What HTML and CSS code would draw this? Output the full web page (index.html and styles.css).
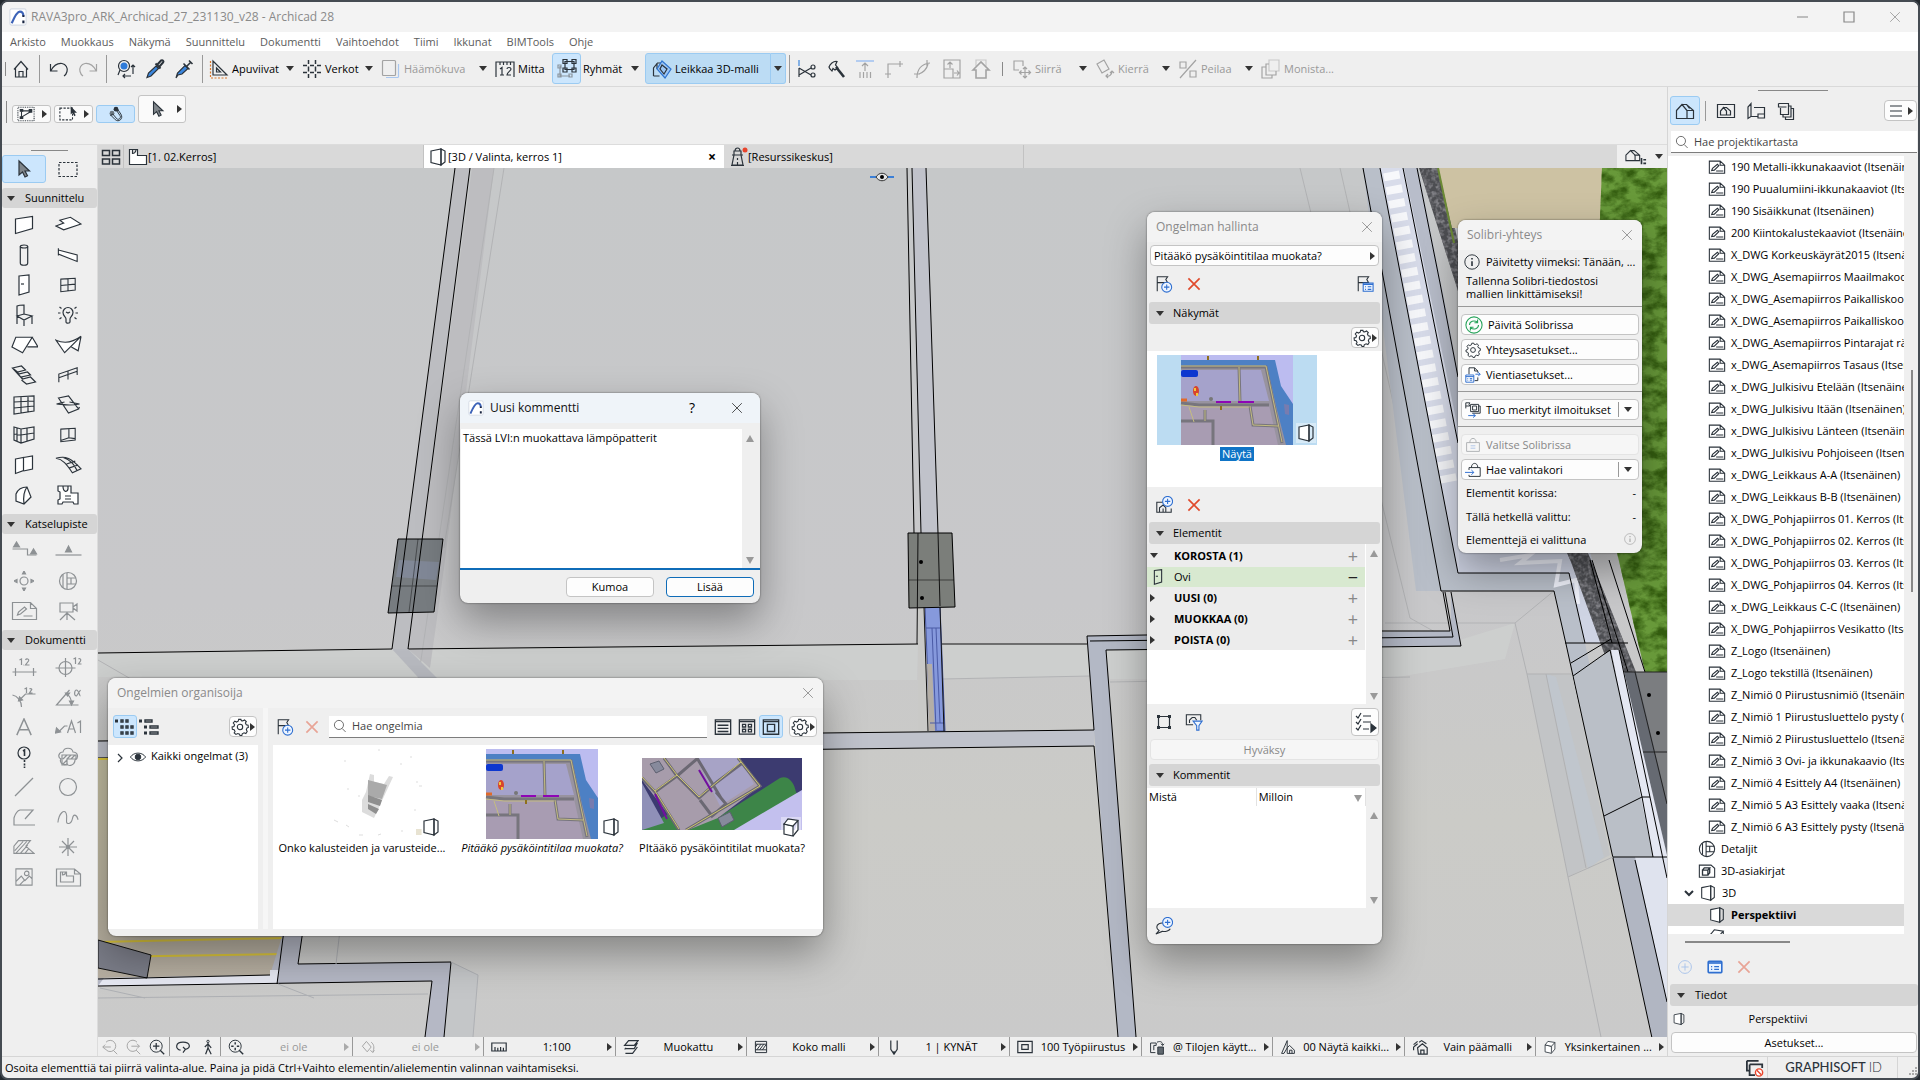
FILE: index.html
```html
<!DOCTYPE html>
<html lang="fi">

<head>
    <meta charset="utf-8">
    <meta name="viewport" content="width=device-width">
    <title>RAVA3pro_ARK_Archicad_27_231130_v28 - Archicad 28</title>
    <link rel="stylesheet" href="styles.css">
</head>

<body>
    <!-- icon sprite -->
    <svg class="sprite" aria-hidden="true">
        <symbol id="logo" viewBox="0 0 20 20"><rect x="1" y="1" width="18" height="18" rx="2" fill="#fff" stroke="#d5dbe5" /><path d="M3 17C6 10 9 4 12 4c3 0 4 2 4 5" stroke="#3d63b8" stroke-width="2.4" /><path d="M16 8v2M16 14v3" stroke="#16233f" stroke-width="2.4" /></symbol>
        <symbol id="home" viewBox="0 0 20 20"><path d="M3 10.500 10 2.500l7 8M4.500 9v9h11V9M8 18v-5.500h4V18" /></symbol>
        <symbol id="undo" viewBox="0 0 20 20"><path d="M1.500 5v7h7M2 11.500C5 6 9 4 13 4.500c4 .7 6 4.500 5 8-.5 2-1.500 3.500-3 4.500" /></symbol>
        <symbol id="redo" viewBox="0 0 20 20"><path d="M18.500 5v7h-7M18 11.500C15 6 11 4 7 4.500c-4 .7-6 4.500-5 8 .5 2 1.500 3.500 3 4.500" /></symbol>
        <symbol id="find" viewBox="0 0 20 20"><circle cx="8" cy="7" r="5.500" /><circle cx="8" cy="7" r="3.500" fill="#2f7bd9" stroke="none" /><path d="M4 11l-2 5M17 15V6m-2 2 2-2 2 2M15 17H7m2-2-2 2 2 2" /></symbol>
        <symbol id="pick" viewBox="0 0 20 20"><path d="m12 6 4-4.500c2-1 3 1 2 2L14 8M10.500 4.500l5 5" stroke-width="2" /><path d="m11 7 2.500 2.500L6 17l-4 1.500L3.500 14z" fill="#3b86dd" /></symbol>
        <symbol id="inject" viewBox="0 0 20 20"><path d="m13 7 4-4M15 1.500l3.500 3.500M9.500 4.500l6 6" stroke-width="1.600" /><path d="m11 6.500 3 3L8 15l-4 1-2 3 1.500-5z" fill="#3b86dd" /></symbol>
        <symbol id="guide" viewBox="0 0 20 20"><path d="M4 2v14h14zM7.500 9v4h4z" /><path d="M1.500 2v17H19" stroke="#d9772b" stroke-dasharray="2 1.500" /></symbol>
        <symbol id="hash" viewBox="0 0 20 20"><path d="M6.500 1v4m0 2.500v5m0 2.500v4M13.500 1v4m0 2.500v5m0 2.500v4M1 6.500h4m3 0h4m3 0h4M1 13.500h4m3 0h4m3 0h4" stroke-width="1.500" /></symbol>
        <symbol id="ghost" viewBox="0 0 20 20"><rect x="1.500" y="1.500" width="13" height="15" rx="1" /><path d="M17.500 5v12.500a1 1 0 0 1-1 1H5" stroke="#a9c7ef" /></symbol>
        <symbol id="measure" viewBox="0 0 20 20"><path d="M1 18V3h18v15M5 3v3M8.500 3v3M12 3v3M15.500 3v3M5 10l2-1.500V16m-2 0h4M12 10c0-2 4-2 4 0 0 2-4 3-4 6h4" /></symbol>
        <symbol id="group" viewBox="0 0 20 20"><path d="M8 2.500h9v8H8zM6 0.500v4h4v-4zM15 .5v4h4v-4zM6 9v4h4V9zM15 9v4h4V9z" /><path d="M3 7v10h10M1 6h3v3H1zM1 15h3v3H1zM12 15h3v3h-3z" stroke="#8b959e" /></symbol>
        <symbol id="cut3d" viewBox="0 0 20 20"><path d="M1.500 17V9l4-5h4M1.500 17h6M5 4v6" /><path d="m10 2 9 8-6 9-8-9z" stroke="#2f74d0" fill="#9cc6f5" /><path d="m10 6 5 4-3 5-4-5z" /></symbol>
        <symbol id="scissors" viewBox="0 0 20 20"><path d="M2 1v6" stroke="#3b86dd" /><path d="M2 9v9M2 9l12 7M2 16l12-7" /><circle cx="16" cy="8" r="2" /><circle cx="16" cy="16" r="2" /></symbol>
        <symbol id="axe" viewBox="0 0 20 20"><path d="M3 8c1-3 4-6 8-5.500L9.500 6 12 9 9 11 7 9.500 6 12c-1-1-2.500-2-3-4z" /><path d="m10 8 8 10" stroke-width="2.600" /></symbol>
        <symbol id="raise" viewBox="0 0 20 20"><path d="M1 2h18" stroke="#9fc0f0" stroke-width="1.600" /><path d="M10 12V4M7 7l3-3 3 3M5 13v6M8.500 13v6M12 13v6M15.500 13v6" /></symbol>
        <symbol id="corner" viewBox="0 0 20 20"><path d="M4 19V5h15M16 2v6M1 15h6" /></symbol>
        <symbol id="arcedge" viewBox="0 0 20 20"><path d="M4 19C4 11 8 5 17 4M14 1v6M1 15h6M6 15C11 13 14 9 15 5" /></symbol>
        <symbol id="resize" viewBox="0 0 20 20"><path d="M2 1h16v18H2zM2 10h9v9M8 9V3M5.500 5.500 8 3l2.500 2.500M12 14h5m-2-2.500 2 2.500-2 2.500" /></symbol>
        <symbol id="rooftrim" viewBox="0 0 20 20"><path d="m2 11 8-8 8 8h-3v8H5v-8z" stroke-width="1.600" /><path d="M5 7V1h10v6" opacity=".5" /></symbol>
        <symbol id="move" viewBox="0 0 20 20"><path d="M7 11H2V2h9v5M13 8v11M7.500 13.500h11M11 10l2-2 2 2M11 17l2 2 2-2M9.500 11.500l-2 2 2 2M16.500 11.500l2 2-2 2" /></symbol>
        <symbol id="rotate" viewBox="0 0 20 20"><path d="m2 5 7-4 5 9-7 4zM11 17c3 1 6-1 6-5m-2 2 2-2 2 2M13 15l-2 2 2 2" /></symbol>
        <symbol id="mirror" viewBox="0 0 20 20"><path d="M18 1 2 19M2 3h6v6H2zM12 12h6v6h-6z" /></symbol>
        <symbol id="copies" viewBox="0 0 20 20"><path d="M8 1h10v11H8z" opacity=".5" /><path d="M8 5H5v11h10v-4M5 8H1v11h10v-3" /></symbol>
        <symbol id="geom" viewBox="0 0 20 17"><path d="M1 1h18v15H1z" stroke-dasharray="1 1" /><path d="M4 5h12M5 6v6M5 12l10-6" /><path d="M3 3h4v3H3zM13 3h4v4h-4zM3 11h4v3H3z" fill="#2b333b" stroke="none" /></symbol>
        <symbol id="marqueesel" viewBox="0 0 20 17"><path d="M1 2h14v13H1z" stroke-dasharray="2.500 1.500" /><path d="M13 0v9l2-2 2 4 1.500-1-1.500-3h3z" fill="#2b333b" stroke="none" /></symbol>
        <symbol id="magnet" viewBox="0 0 20 20"><circle cx="5" cy="9" r="3" fill="#6b7781" stroke="none" /><circle cx="10" cy="4" r="3" fill="#2b333b" stroke="none" /><path d="m6 10 5 6c2 2 6-1 4-4l-4-6M3 11l6 6c4 4 11-1 7-7l-4-6M6 10l-3 2" /></symbol>
        <symbol id="arrow" viewBox="0 0 20 20"><path d="M5 2v14l3.500-3 2.500 5 2.500-1.200L11 12h4.500z" fill="#7f858a" /></symbol>
        <symbol id="marquee" viewBox="0 0 20 20"><path d="M1 3.500h18v14H1z" stroke-dasharray="2.500 1.500" /></symbol>
        <symbol id="tabs" viewBox="0 0 20 20"><path d="M1.500 3.500h7v5h-7zM11.500 3.500h7v5h-7zM1.500 12h7v5h-7zM11.500 12h7v5h-7z" stroke-width="1.500" /></symbol>
        <symbol id="plan" viewBox="0 0 20 20"><path d="M1.500 2.500h8v6h9v9h-17zM4.500 3v3.500c2 0 3-1 3.500-3.500" fill="#fff" /></symbol>
        <symbol id="persp" viewBox="0 0 20 20"><path d="m3 4 10-2v16L3 15.500z" fill="#fff" /><path d="m13 2 4 2v11l-4 3z" /></symbol>
        <symbol id="axo" viewBox="0 0 20 20"><path d="m3 7 9 2v10l-9-2z" fill="#fff" /><path d="m3 7 4-5 10 1.500L12 9zM17 3.500V13l-5 6" fill="#fff" /></symbol>
        <symbol id="tower" viewBox="0 0 20 20"><path d="M6 8 4 18h11L13 8zM4 8h11M6 8V4h7v4M7 4c0-4 5-4 5 0M3 18.500h13M9.500 11v2m0 2v3" /><circle cx="17" cy="3" r="2.500" fill="#e8452c" stroke="none" /></symbol>
        <symbol id="house" viewBox="0 0 20 20"><path d="M1.500 9.500 7 3.500l5 6v8H1.500zM7 3.500h4.500l7 6v8H12v-8M11.500 3.500l3 4M12 9.500h6.500" /></symbol>
        <symbol id="houselist" viewBox="0 0 24 20"><path d="M1 8l5-5 5 5v6H1zM6 3h4l6 5v6h-5V8M10 8h6" /><path d="M18 11v7M20 13h3M20 17h3" stroke-width="1.800" /></symbol>
        <symbol id="viewmap" viewBox="0 0 20 20"><path d="M1.500 3.500h17v13h-17zM4.500 14v-4l3-3.500 3 3.500v4zM7.500 6.500h3l4 3.500v4h-4" /></symbol>
        <symbol id="layouts" viewBox="0 0 20 20"><path d="M2 6v11.500l3-2V2.500zM5 15.500h7M8 6.500h10.500v10.500H12v-4h6" /></symbol>
        <symbol id="publish" viewBox="0 0 20 20"><path d="M2.500 2.500h10v11h-8V7M2.500 2.500V6h8M12.500 5h2.500v11H7v-2.500M15 7.500h2.500v11h-8V16" /></symbol>
        <symbol id="glass" viewBox="0 0 20 20"><circle cx="8.500" cy="8.500" r="6.500" /><path d="m13 13.500 5 5" /></symbol>
        <symbol id="draw" viewBox="0 0 20 20"><path d="M1.500 3.500h12l5 4.500v9h-17zM13.500 3.500V8h5" /><path d="m4 14 1-2.500L10.500 7l1.500 1.500L7 13.500zM9 14.500h8" /></symbol>
        <symbol id="detail" viewBox="0 0 20 20"><circle cx="10" cy="10" r="8.500" /><path d="M5 3.500v13M9 2v16M9 7h9M9 13h9M13 7v6" /></symbol>
        <symbol id="doc3d" viewBox="0 0 20 20"><path d="M1.500 3.500h13l4 3.500v10h-17z" /><path d="M5 9h6v5.500H5zM5 9l2-2.500h6L11 9M13 6.500V12l-2 2.500" stroke-width="1.500" /></symbol>
        <symbol id="plusc" viewBox="0 0 20 20"><circle cx="10" cy="10" r="8" /><path d="M10 5.500v9M5.500 10h9" /></symbol>
        <symbol id="props" viewBox="0 0 20 20"><rect x="1.500" y="3" width="17" height="14" rx="1" fill="#e9f3ff" stroke-width="2" /><path d="M2 5h16" stroke-width="2" /><path d="M5 9.500h1.500M9 9.500h6M5 13h1.500M9 13h6" stroke-width="1.500" /></symbol>
        <symbol id="cross" viewBox="0 0 20 20"><path d="m2 2 16 16M18 2 2 18" /></symbol>
        <symbol id="flagadd" viewBox="0 0 20 20"><path d="M2.500 18V2H14l-2 3 2 3.500H2.500" /><circle cx="13" cy="13.500" r="5.500" fill="#eef5ff" stroke="#2f6fd0" /><path d="M13 10.500v6M10 13.500h6" stroke="#2f6fd0" /></symbol>
        <symbol id="flaglist" viewBox="0 0 20 20"><path d="M2.500 18V2H14l-2 3 2 3.500H2.500" /><path d="M8 9h11v9H8zM8 10.500h11M10 13h1m2 0h4m-7 3h1m2 0h4" fill="#eef5ff" stroke="#2f6fd0" /></symbol>
        <symbol id="gear" viewBox="0 0 20 20"><circle cx="10" cy="10" r="3" /><path d="m8.500 1.500-.5 2-2 1L4.200 3.500 2.500 5.500 4 7.500l-.8 2-2 .5.3 2.500 2 .5 1 2-1 1.500 2 1.800 2-1 2 .7.500 1.500H12l.5-2 2-1 2 .7L18 15l-1-2 .8-2 1.500-.5L19 8l-2-.5-1-2L17 4l-2-1.800-2 1L11.500 3l-.5-1.500z" /></symbol>
        <symbol id="thumbs" viewBox="0 0 20 20"><path d="M0 2.500h3v3H0z" fill="#2b333b" stroke="none" /><path d="M6 3h2v2H6zM11 3h2v2h-2zM6 9h2v2H6zM11 9h2v2h-2zM16 9h2v2h-2zM6 15h2v2H6zM11 15h2v2h-2zM16 15h2v2h-2z" stroke-width="1.400" /></symbol>
        <symbol id="treeview" viewBox="0 0 20 20"><path d="M0 2.500h3v3H0zM5 8.500h3v3H5zM5 14.500h3v3H5z" fill="#2b333b" stroke="none" /><path d="M6 3h7v2H6zM11 9h8v2h-8zM11 15h8v2h-8z" stroke-width="1.400" /></symbol>
        <symbol id="eye" viewBox="0 0 20 20"><path d="M.5 10C5 3.500 15 3.500 19.500 10 15 16.500 5 16.500.5 10z" /><circle cx="10" cy="10" r="3.500" fill="#2b333b" /></symbol>
        <symbol id="vlist" viewBox="0 0 20 20"><path d="M1.500 2h17v16h-17zM1.500 4h17M4 8h12M4 11.500h12M4 15h12" stroke-width="1.500" /></symbol>
        <symbol id="vgrid" viewBox="0 0 20 20"><path d="M1.500 2h17v16h-17zM1.500 4h17M5 7h3.500v3H5zM11.500 7H15v3h-3.500zM5 12.500h3.500v3H5zM11.500 12.500H15v3h-3.500z" stroke-width="1.400" /></symbol>
        <symbol id="vbig" viewBox="0 0 20 20"><path d="M1.500 2h17v16h-17zM1.500 4h17M6 7h8v8H6z" stroke-width="1.500" /></symbol>
        <symbol id="viewadd" viewBox="0 0 20 20"><path d="M9 7H2v11h16v-4M5 18v-5l4-3 3 3v5M9 18v-4" /><circle cx="14" cy="6" r="5.500" fill="#eef5ff" stroke="#2f6fd0" /><path d="M14 3v6M11 6h6" stroke="#2f6fd0" /></symbol>
        <symbol id="commentadd" viewBox="0 0 20 20"><path d="M10 7c-4-1-8 1-8 4 0 2 1 3 2.500 4L1 19l7-3c4 .5 8-1 9-3" /><circle cx="14" cy="6" r="5.500" fill="#eef5ff" stroke="#2f6fd0" /><path d="M14 3v6M11 6h6" stroke="#2f6fd0" /></symbol>
        <symbol id="selbox" viewBox="0 0 20 20"><path d="M4.500 4.500h11v11h-11z" /><path d="M3 3h3v3H3zM14 3h3v3h-3zM3 14h3v3H3zM14 14h3v3h-3z" fill="#2b333b" stroke="none" /></symbol>
        <symbol id="viewfilter" viewBox="0 0 20 20"><path d="M9 13H1.500V2h16v6M5 11V8l3-3h3l2 3" /><path d="M9 9h10l-3.500 5v5h-2.500v-5z" fill="#eef5ff" stroke="#2f6fd0" /></symbol>
        <symbol id="checks" viewBox="0 0 24 24"><path d="m3 6 2 2 3-5M3 12l2 2 3-5M3 18l2 2 3-5M10 6h8M10 12h8M10 19h6" /><path d="m18 14 5 4-5 4z" fill="#2b333b" /></symbol>
        <symbol id="info" viewBox="0 0 20 20"><circle cx="10" cy="10" r="9" /><path d="M10 9v6M10 5v2" stroke-width="2" /></symbol>
        <symbol id="sync" viewBox="0 0 20 20"><circle cx="10" cy="10" r="9" /><path d="M5 10c0-4 5-6 9-3m0-3v3.500h-3.500M15 10c0 4-5 6-9 3m0 3v-3.500h3.500" /></symbol>
        <symbol id="export" viewBox="0 0 20 20"><path d="M5 9V1h7l4 4v2M12 1v4h4M12 17h4v-4" /><path d="M1 10h10v9H1zM1 12h10M3 14.500h1m2 0h3m-6 2h1m2 0h3M13 9h6m-2.500-2.500L19 9l-2.500 2.500" stroke="#2f6fd0" /></symbol>
        <symbol id="import" viewBox="0 0 20 20"><path d="M1 8V1h5l-1 2 1 2H1M7 3h10v9H7zM9.500 5h5v5h-5zM17 5h2v9H9" /><path d="M4 17h9m-3-2.500 3 2.500-3 2.500" stroke="#2f6fd0" /></symbol>
        <symbol id="basket" viewBox="0 0 20 20"><path d="M2 7h16v11H2zM6 7c0-7 8-7 8 0" /><path d="M7 11h6M7 14h6" stroke="#2f6fd0" /></symbol>
        <symbol id="basketin" viewBox="0 0 20 20"><path d="M5 10V7h14v11H5v-2M8 7c0-7 8-7 8 0" /><path d="M0 13h11m-3-3 3 3-3 3" stroke="#2f6fd0" /></symbol>
        <symbol id="wall" viewBox="0 0 20 20"><path d="m1.500 4 17-2.500v12l-17 5z" fill="#fff" /></symbol>
        <symbol id="slab" viewBox="0 0 28 20"><path d="m1 11 8-3-4-3 11-3 11 7-18 6-8-4z" fill="#fff" /></symbol>
        <symbol id="column" viewBox="0 0 20 22"><ellipse cx="10" cy="2.500" rx="3.700" ry="1.500" /><path d="M6.300 2.500V19c0 3 7.400 3 7.400 0V2.500" /></symbol>
        <symbol id="beam" viewBox="0 0 24 20"><path d="M1.500 4.500 22 10v7L1.500 9zM1.500 2.500v8" fill="#fff" /></symbol>
        <symbol id="door" viewBox="0 0 20 22"><path d="m5 2 10-1v17L5 21z" fill="#fff" /><path d="M7 10h3" /></symbol>
        <symbol id="doorline" viewBox="0 0 20 22"><path d="m5 2 10-1v17L5 21zM7 10h3" stroke-width="1.500" /></symbol>
        <symbol id="window" viewBox="0 0 20 20"><path d="m2 3.500 16-1v13l-16 2zM10 3v13.500M2 10.500l16-1.500" /></symbol>
        <symbol id="chair" viewBox="0 0 20 22"><path d="M3 20V2c2-1 4-1 7-1v9M3 12l7-2 8 2-8 4zM10 16v6M18 12v8" /></symbol>
        <symbol id="lamp" viewBox="0 0 20 20"><path d="M8 14c0-2-3-3-3-6.500a5 5 0 0 1 10 0C15 11 12 12 12 14v3c0 1.500-4 1.500-4 0zM8 7l2 1 2-1M0 8h2.500M17.500 8H20M1.500 2l2 1.500M18.500 2l-2 1.500M1.500 14l2-1.500M18.500 14l-2-1.500" /></symbol>
        <symbol id="roof" viewBox="0 0 28 20"><path d="M5 2h17L12 18 1 12zM22 2l6 10H17" fill="#fff" /></symbol>
        <symbol id="shell" viewBox="0 0 28 20"><path d="M1 5c9 4 18 2 26-4L10 18zM27 1l-3 15-7-4" fill="#fff" /></symbol>
        <symbol id="stair" viewBox="0 0 26 20"><path d="m1 3 9-2 4 4-8 2zM6 7l1 2 9-2 3 3-9 2 1 2 8-2 5 5-9 2-5-4M1 3l10 11" /></symbol>
        <symbol id="rail" viewBox="0 0 24 20"><path d="M2 18V9l20-7v8M2 13l20-7M12 6v9" /></symbol>
        <symbol id="curtain" viewBox="0 0 22 20"><path d="m1 2 20-1v15L1 19zM8 2v16M15 1v16M1 7l20-1M1 13l20-2" /></symbol>
        <symbol id="morph" viewBox="0 0 24 20"><path d="m2 3 10-2 10 13-10 4zM0 9c8 1 14 2 23 0L13 7M12 18l10-4 1-2M0 9l8-2" /></symbol>
        <symbol id="zone" viewBox="0 0 22 20"><path d="m1 2 7 2 13-2v12L8 18l-7-3zM8 4v14M14 3v13M4 3v13M1 9l7 1 13-2" /></symbol>
        <symbol id="opening" viewBox="0 0 20 20"><path d="m2 3.500 16-1v13l-16 2zM11 3v10l7 1M11 13l-9 3" /></symbol>
        <symbol id="panel" viewBox="0 0 20 20"><path d="m1.500 4 8-1.500v13l-8 3zM9.500 2.500l9-1.500v13l-9 2" fill="#fff" /></symbol>
        <symbol id="mesh" viewBox="0 0 28 20"><path d="M1 3c10-3 16 0 26 11l-9 4C12 9 8 4 1 3zM8 2c9 3 12 8 15 14M12 9l9-3M15 13l9-3" /></symbol>
        <symbol id="skylight" viewBox="0 0 20 20"><path d="M2 16V9c2-5 6-7 11-7l4 10-7 7zM13 2c-3 4-4 10-3 17" fill="#fff" /></symbol>
        <symbol id="object" viewBox="0 0 22 20"><path d="M1 1h5c0 6 4 7 5 3V1h3v7h7v11h-4l-1-2H6l-1 2H1v-4l2-1V7L1 6zM11 1H6M8 11h6M8 14h6" fill="#fff" /></symbol>
        <symbol id="section" viewBox="0 0 26 20"><path d="M1 8h15v6h9" /><path d="m2 6 3-5 3 5zM19 13l3-5 3 5z" fill="currentColor" /></symbol>
        <symbol id="elev" viewBox="0 0 26 20"><path d="M0 14h26" /><path d="m10 11 3-6 3 6z" fill="currentColor" /></symbol>
        <symbol id="interior" viewBox="0 0 20 20"><circle cx="10" cy="10" r="4" /><path d="m8.500 3 1.500-3 1.500 3zM8.500 17l1.500 3 1.500-3zM3 8.500 0 10l3 1.500zM17 8.500l3 1.500-3 1.500z" fill="currentColor" /></symbol>
        <symbol id="drawwide" viewBox="0 0 26 20"><path d="M1 1.500h18l6 6v11H1zM19 1.500v6h6M6 14l1-3 6-5 2 2-6 5zM12 15h9" /></symbol>
        <symbol id="camera" viewBox="0 0 20 20"><path d="M2 2h13v9H2zM15 6l4-3v7l-4-3M9 11v8M9 12l-7 7M9 12l8 7" /></symbol>
        <symbol id="dim" viewBox="0 0 26 20"><path d="M1 15h24M4 11v8M22 11v8M8 3l2-1v6M12 8h.5M14 3c1-2 4-1 3 1l-3 4h4" /></symbol>
        <symbol id="level" viewBox="0 0 26 20"><circle cx="10" cy="11" r="6.500" /><path d="M0 11h20M10 1v19M18 2l2-1v6M23 2c1-1 3 0 2 2l-2 3h3" /></symbol>
        <symbol id="radial" viewBox="0 0 26 20"><path d="M1 8c5 1 9 6 9 12M8 13l6-6h10M13 2l2-1v5M18 2c1-1 3 0 2 1l-2 3h3" /><path d="m7 14 4-1-3-3z" fill="currentColor" /></symbol>
        <symbol id="angle" viewBox="0 0 26 20"><path d="M14 3 1 18h22M11 7c4 2 5 6 5 10M25 3l-4 6c-3 0-2-6 0-6s3 6 4 6" /><path d="m10 6 4 0-2 3zM14 14l4 0-2 4z" fill="currentColor" /></symbol>
        <symbol id="texta" viewBox="0 0 20 20"><path d="M2 19 10 1l8 18M5 13h10" stroke-width="1.600" /></symbol>
        <symbol id="label" viewBox="0 0 26 20"><path d="m3 15 6-6h3M12 16l4-12 4 12M13 12h5M22 6l3-2v12" /><path d="M0 16l1-5 4 4z" fill="currentColor" /></symbol>
        <symbol id="marker" viewBox="0 0 20 22"><circle cx="10" cy="7" r="6" /><path d="M9 5l1.500-1v6M10.500 14v2m0 1.500v2m0 1v2" stroke-width="1.600" /></symbol>
        <symbol id="change" viewBox="0 0 22 20"><path d="M6 5c1-5 9-5 10 0 5 0 6 6 2 8 0 5-6 7-8 4-4 2-8-2-6-5C0 10 2 5 6 5z" /><path d="M5 8h14v4h-9v6H5zM6 12l4-4M10 12l4-4M14 12l4-4M6 17l4-4" /></symbol>
        <symbol id="line" viewBox="0 0 20 20"><path d="M1 19 19 1" /></symbol>
        <symbol id="circle" viewBox="0 0 20 20"><circle cx="10" cy="10" r="8.500" /></symbol>
        <symbol id="poly" viewBox="0 0 22 20"><path d="m12 12 8-9H7C3 4 2 8 1 11v7h21" /></symbol>
        <symbol id="spline" viewBox="0 0 24 20"><path d="M1 16C2 6 8 1 10 6s-2 12 3 11 3-9 6-9 3 2 4 5" /></symbol>
        <symbol id="fill" viewBox="0 0 24 20"><path d="M1 17v-8l5-6h13l-5 6 9 8zM2 14 11 4M3 17 15 4M8 17l8-9M13 17l4-5" /></symbol>
        <symbol id="hotspot" viewBox="0 0 20 20"><circle cx="10" cy="10" r="1.500" /><path d="M10 1v18M1 10h18M4 4l12 12M16 4 4 16" /></symbol>
        <symbol id="figure" viewBox="0 0 20 20"><path d="M1 1h18v18H1zM1 15l6-6 4 5 5-5 3 3M5 19l6-6" /><circle cx="13" cy="6" r="2.500" /></symbol>
        <symbol id="drawing" viewBox="0 0 26 20"><path d="M1 2h18l6 5v12H1zM19 2v5h6M5 5h6v4h7v6H5zM7 5v3c2 0 3-1 3-3" /></symbol>
        <symbol id="zprev" viewBox="0 0 20 20"><path d="M5 4a7 7 0 1 1-1 8M14 14l5 5M1 10h10M4 7l-3 3 3 3" /></symbol>
        <symbol id="znext" viewBox="0 0 20 20"><path d="M15 4a7 7 0 1 0 0 9M14 14l5 5M8 9h10M15 6l3 3-3 3" /></symbol>
        <symbol id="zin" viewBox="0 0 20 20"><circle cx="9" cy="9" r="7.500" /><path d="m14 14 5 5M9 5v8M5 9h8" stroke-width="1.600" /></symbol>
        <symbol id="zfit" viewBox="0 0 20 20"><circle cx="9" cy="9" r="7.500" /><path d="m14 14 5 5M9 4v3m0 4v3M4 9h3m4 0h3" stroke-width="1.800" /></symbol>
        <symbol id="orbit" viewBox="0 0 20 20"><path d="M7 14C0 13 0 4 10 4s10 8 3 9M10 10l3 3-3 4" stroke-width="1.500" /></symbol>
        <symbol id="walk" viewBox="0 0 20 20"><circle cx="10" cy="3" r="1.500" /><path d="M10 5v6l-3 8M10 11l4 8M6 10l4-4 4 5" stroke-width="1.500" /></symbol>
        <symbol id="bucket" viewBox="0 0 20 20"><path d="m8 3 6 7-5 6-6-7zM14 4c4 3 4 8 2 12M13 14l3 3 2-3" /></symbol>
        <symbol id="scale" viewBox="0 0 20 20"><path d="M1 5h18v10H1zM5 15v-5M8.500 15v-4M12 15v-5M15.500 15v-4" stroke-width="1.500" /></symbol>
        <symbol id="layers" viewBox="0 0 20 20"><path d="m2 8 5-6h12l-5 6zM2 13l2-2M14 8l4-3-4 7H3M3 18h9l6-8" stroke-width="1.500" /></symbol>
        <symbol id="structure" viewBox="0 0 20 20"><path d="M2 2h16v16H2zM2 6h16M2 14h16M4 14l6-8M8 14l6-8M12 14l5-7M2 10l3-4" stroke-width="1.400" /></symbol>
        <symbol id="pen" viewBox="0 0 20 20"><path d="M6 2v11l4 6 4-6V2M10 19v-4" stroke-width="1.500" /></symbol>
        <symbol id="frame" viewBox="0 0 20 20"><path d="M1 3h18v14H1zM6 7h8v6H6z" stroke-width="1.500" /></symbol>
        <symbol id="override" viewBox="0 0 20 20"><path d="M8 17H2V5h7v3H6v6M10 4c5-2 7 0 7 4m-2-2 2 2 2-2" /><path d="M11 10h7v9h-7z" fill="#60686f" /></symbol>
        <symbol id="reno" viewBox="0 0 20 20"><path d="M2 18 9 2v9l-4 7zM9 11l3-3 6 6v4H9zM12 18v-4h3v4" /></symbol>
        <symbol id="partial" viewBox="0 0 20 20"><path d="M2 10l5-4M2 7l5-4M2 14v-4M7 11l6-5 6 5v8H8zM11 19v-5h4v5M9 4l3-2 6 4" stroke-width="1.500" /></symbol>
        <symbol id="offline" viewBox="0 0 20 20"><path d="M1 2h13M1 2v11h3M4 6h14v4M4 6v12h6" stroke-width="2" /><circle cx="14.500" cy="15" r="4" fill="#fff" stroke="#e8452c" stroke-width="1.600" /><path d="m12 12.500 5 5" stroke="#e8452c" stroke-width="1.600" /></symbol>
        <symbol id="thumb-plan" viewBox="0 0 112 90">
            <path d="M0 0h112v90H0z" fill="#bcbcf0" stroke="none" />
            <path d="M0 5h94l6 26 12 18v41H0z" fill="#4d80c4" stroke="none" />
            <path d="M0 11h86l10 44 9 35H0z" fill="#98939f" stroke="none" />
            <path d="M0 15h80l8 31H0z" fill="#a5a2cb" stroke="none" />
            <path d="M0 50h88l9 40H0z" fill="#a89cb2" stroke="none" />
            <path d="M58 12l1 35M0 12h85l16 76M0 48l18 2h70M69 51l3 19 25 1M24 55l0 11h8v24M0 66h25" stroke="#77757d" stroke-width="3" fill="none" />
            <path d="M58 12l1 35M0 11h85l16 76M0 50l18 2h50M69 51l3 19 25 1M24 55l0 11M8 52l5 15" stroke="#c4bc80" stroke-width="1" fill="none" />
            <rect x="0" y="15" width="17" height="7" rx="2" fill="#0d37cf" stroke="none" />
            <path d="M35 47h15M57 47h16" stroke="#8e05b5" stroke-width="2" />
            <ellipse cx="15" cy="36" rx="3" ry="5" fill="#d8442b" stroke="none" />
            <path d="M14 33v3m2 2v3" stroke="#f1c63c" stroke-width="2" />
            <circle cx="30" cy="44" r="2" fill="#777" stroke="none" />
            <path d="M27 1v4M77 1v4M40 51v4" stroke="#8e701c" stroke-width="2" />
            <path d="M0 45h6" stroke="#e06a2a" stroke-width="3" />
            <path d="M103 49l5 1v10l-4-1z" fill="#787caf" stroke="none" />
        </symbol>
    </svg>

    <div class="app">
        <header class="titlebar">
            <svg class="ico"><use href="#logo" /></svg>
            <h1>RAVA3pro_ARK_Archicad_27_231130_v28 - Archicad 28</h1>
            <div class="window-buttons">
                <button aria-label="Pienennä"><svg class="ico s12"><path d="M0 6h11" /></svg></button>
                <button aria-label="Suurenna"><svg class="ico s12"><path d="M1 1h10v10H1z" /></svg></button>
                <button aria-label="Sulje"><svg class="ico s12"><use href="#cross" /></svg></button>
            </div>
        </header>

        <nav class="menubar">
            <a href="#">Arkisto</a><a href="#">Muokkaus</a><a href="#">Näkymä</a><a href="#">Suunnittelu</a><a href="#">Dokumentti</a><a href="#">Vaihtoehdot</a><a href="#">Tiimi</a><a href="#">Ikkunat</a><a href="#">BIMTools</a><a href="#">Ohje</a>
        </nav>

        <div class="toolbar">
            <span class="grip"></span>
            <button class="tool" aria-label="Koti"><svg class="ico"><use href="#home" /></svg></button>
            <span class="rule"></span>
            <button class="tool" aria-label="Kumoa toiminto"><svg class="ico"><use href="#undo" /></svg></button>
            <button class="tool dim" aria-label="Tee uudelleen"><svg class="ico"><use href="#redo" /></svg></button>
            <span class="rule"></span>
            <button class="tool" aria-label="Etsi ja valitse"><svg class="ico"><use href="#find" /></svg></button>
            <button class="tool" aria-label="Poimi parametrit"><svg class="ico"><use href="#pick" /></svg></button>
            <button class="tool" aria-label="Siirrä parametrit"><svg class="ico"><use href="#inject" /></svg></button>
            <span class="rule"></span>
            <button class="tool labelled w-guide"><svg class="ico"><use href="#guide" /></svg>Apuviivat<i class="caret"></i></button>
            <button class="tool labelled w-grid"><svg class="ico"><use href="#hash" /></svg>Verkot<i class="caret"></i></button>
            <button class="tool labelled w-ghost dim"><svg class="ico"><use href="#ghost" /></svg>Häämökuva<i class="caret"></i></button>
            <button class="tool labelled w-measure"><svg class="ico"><use href="#measure" /></svg>Mitta</button>
            <button class="tool active" aria-label="Ryhmitys"><svg class="ico"><use href="#group" /></svg></button>
            <button class="tool labelled w-group">Ryhmät<i class="caret"></i></button>
            <button class="tool labelled w-cut active"><svg class="ico"><use href="#cut3d" /></svg>Leikkaa 3D-malli</button>
            <button class="tool cut-menu active" aria-label="Leikkausvalikko"><i class="caret"></i></button>
            <span class="rule close"></span>
            <button class="tool" aria-label="Leikkaa"><svg class="ico"><use href="#scissors" /></svg></button>
            <button class="tool" aria-label="Halkaise"><svg class="ico"><use href="#axe" /></svg></button>
            <button class="tool dim" aria-label="Säädä"><svg class="ico"><use href="#raise" /></svg></button>
            <button class="tool dim" aria-label="Yhdistä"><svg class="ico"><use href="#corner" /></svg></button>
            <button class="tool dim" aria-label="Pyöristä"><svg class="ico"><use href="#arcedge" /></svg></button>
            <button class="tool dim" aria-label="Muuta kokoa"><svg class="ico"><use href="#resize" /></svg></button>
            <button class="tool dim" aria-label="Rajaa kattoon"><svg class="ico"><use href="#rooftrim" /></svg></button>
            <span class="grip edit-grip"></span>
            <button class="tool labelled w-edit dim"><svg class="ico"><use href="#move" /></svg>Siirrä<i class="caret"></i></button>
            <button class="tool labelled w-edit dim"><svg class="ico"><use href="#rotate" /></svg>Kierrä<i class="caret"></i></button>
            <button class="tool labelled w-edit dim"><svg class="ico"><use href="#mirror" /></svg>Peilaa<i class="caret"></i></button>
            <button class="tool labelled dim"><svg class="ico"><use href="#copies" /></svg>Monista...</button>
        </div>

        <div class="workspace">
            <div class="main">
                <div class="infobox">
                    <span class="grip"></span>
                    <button class="box" aria-label="Geometria"><svg class="ico"><use href="#geom" /></svg><i class="next"></i></button>
                    <button class="box" aria-label="Valintatapa"><svg class="ico"><use href="#marqueesel" /></svg><i class="next"></i></button>
                    <button class="box active" aria-label="Magneetti"><svg class="ico"><use href="#magnet" /></svg></button>
                    <button class="box tall" aria-label="Nuoli"><svg class="ico"><use href="#arrow" /></svg><i class="next"></i></button>
                </div>

                <div class="body">
                    <aside class="toolbox">
                        <span class="drag"></span>
                        <div class="tools selectors">
                            <button class="active" aria-label="Nuoli"><svg class="ico"><use href="#arrow" /></svg></button>
                            <button aria-label="Valinta-alue"><svg class="ico"><use href="#marquee" /></svg></button>
                        </div>
                        <button class="section"><i class="caret"></i>Suunnittelu</button>
                        <div class="tools">
                            <button aria-label="Seinä"><svg class="ico"><use href="#wall" /></svg></button>
                            <button aria-label="Laatta"><svg class="ico wide"><use href="#slab" /></svg></button>
                            <button aria-label="Pilari"><svg class="ico tall"><use href="#column" /></svg></button>
                            <button aria-label="Palkki"><svg class="ico tall"><use href="#beam" /></svg></button>
                            <button aria-label="Ovi"><svg class="ico tall"><use href="#door" /></svg></button>
                            <button aria-label="Ikkuna"><svg class="ico s18"><use href="#window" /></svg></button>
                            <button aria-label="Objekti"><svg class="ico tall"><use href="#chair" /></svg></button>
                            <button aria-label="Valaisin"><svg class="ico"><use href="#lamp" /></svg></button>
                            <button aria-label="Katto"><svg class="ico wide"><use href="#roof" /></svg></button>
                            <button aria-label="Kuori"><svg class="ico wide"><use href="#shell" /></svg></button>
                            <button aria-label="Porras"><svg class="ico wide"><use href="#stair" /></svg></button>
                            <button aria-label="Kaide"><svg class="ico tall"><use href="#rail" /></svg></button>
                            <button aria-label="Verhoseinä"><svg class="ico tall"><use href="#curtain" /></svg></button>
                            <button aria-label="Muoto"><svg class="ico wide"><use href="#morph" /></svg></button>
                            <button aria-label="Vyöhyke"><svg class="ico tall"><use href="#zone" /></svg></button>
                            <button aria-label="Aukko"><svg class="ico s18"><use href="#opening" /></svg></button>
                            <button aria-label="Paneeli"><svg class="ico"><use href="#panel" /></svg></button>
                            <button aria-label="Pinta"><svg class="ico wide"><use href="#mesh" /></svg></button>
                            <button aria-label="Kattoikkuna"><svg class="ico"><use href="#skylight" /></svg></button>
                            <button aria-label="Tila"><svg class="ico tall"><use href="#object" /></svg></button>
                        </div>
                        <button class="section"><i class="caret"></i>Katselupiste</button>
                        <div class="tools grey">
                            <button aria-label="Leikkaus"><svg class="ico wide"><use href="#section" /></svg></button>
                            <button aria-label="Julkisivu"><svg class="ico wide"><use href="#elev" /></svg></button>
                            <button aria-label="Seinäprojektio"><svg class="ico"><use href="#interior" /></svg></button>
                            <button aria-label="Detalji"><svg class="ico"><use href="#detail" /></svg></button>
                            <button aria-label="Työpiirustus"><svg class="ico wide"><use href="#drawwide" /></svg></button>
                            <button aria-label="Kamera"><svg class="ico"><use href="#camera" /></svg></button>
                        </div>
                        <button class="section"><i class="caret"></i>Dokumentti</button>
                        <div class="tools grey">
                            <button aria-label="Mitoitus"><svg class="ico wide"><use href="#dim" /></svg></button>
                            <button aria-label="Korkomitta"><svg class="ico wide"><use href="#level" /></svg></button>
                            <button aria-label="Sädemitta"><svg class="ico wide"><use href="#radial" /></svg></button>
                            <button aria-label="Kulmamitta"><svg class="ico wide"><use href="#angle" /></svg></button>
                            <button aria-label="Teksti"><svg class="ico s18"><use href="#texta" /></svg></button>
                            <button aria-label="Selite"><svg class="ico wide"><use href="#label" /></svg></button>
                            <button class="strong" aria-label="Akseli"><svg class="ico tall"><use href="#marker" /></svg></button>
                            <button aria-label="Muutos"><svg class="ico tall"><use href="#change" /></svg></button>
                            <button aria-label="Viiva"><svg class="ico"><use href="#line" /></svg></button>
                            <button aria-label="Ympyrä"><svg class="ico"><use href="#circle" /></svg></button>
                            <button aria-label="Murtoviiva"><svg class="ico tall"><use href="#poly" /></svg></button>
                            <button aria-label="Käyrä"><svg class="ico tall"><use href="#spline" /></svg></button>
                            <button aria-label="Täyte"><svg class="ico tall"><use href="#fill" /></svg></button>
                            <button aria-label="Tartuntapiste"><svg class="ico"><use href="#hotspot" /></svg></button>
                            <button aria-label="Kuva"><svg class="ico s18"><use href="#figure" /></svg></button>
                            <button aria-label="Piirustus"><svg class="ico wide"><use href="#drawing" /></svg></button>
                        </div>
                    </aside>

                    <div class="center">
                        <div class="tabs">
                            <button class="overview" aria-label="Välilehdet"><svg class="ico"><use href="#tabs" /></svg></button>
                            <button class="tab"><svg class="ico"><use href="#plan" /></svg>[1. 02.Kerros]</button>
                            <button class="tab current"><svg class="ico"><use href="#persp" /></svg>[3D / Valinta, kerros 1]<b>×</b></button>
                            <button class="tab"><svg class="ico"><use href="#tower" /></svg>[Resurssikeskus]</button>
                            <button class="tab-menu" aria-label="Näkymävalikko"><svg class="ico tall"><use href="#houselist" /></svg><i class="caret"></i></button>
                        </div>

                        <div class="viewport">
                            <!-- 3D model view -->
                            <svg class="scene" viewBox="98 168 1569 869" preserveAspectRatio="xMidYMid slice">
                                <defs>
                                    <filter id="grain" x="0" y="0" width="100%" height="100%" color-interpolation-filters="sRGB">
                                        <feTurbulence type="fractalNoise" baseFrequency=".07 .1" numOctaves="4" seed="4" />
                                        <feColorMatrix values="0 0 0 0 .2  0 0 0 0 .36  0 0 0 0 .06  0 2.500 0 0 -.900" />
                                        <feComposite in2="SourceGraphic" operator="in" />
                                    </filter>
                                    <filter id="gravel" x="0" y="0" width="100%" height="100%" color-interpolation-filters="sRGB">
                                        <feTurbulence type="fractalNoise" baseFrequency=".25" numOctaves="2" seed="9" />
                                        <feColorMatrix values="0 0 0 0 .5  0 0 0 0 .5  0 0 0 0 .52  0 3 0 0 -1.200" />
                                        <feComposite in2="SourceGraphic" operator="in" />
                                    </filter>
                                    <linearGradient id="floor" x1="0" y1="0" x2="0" y2="1">
                                        <stop offset="0" stop-color="#c6c8c9" /><stop offset=".5" stop-color="#c8c8ca" /><stop offset=".75" stop-color="#cbcbc7" /><stop offset="1" stop-color="#cacaca" />
                                    </linearGradient>
                                    <linearGradient id="tan" x1="0" y1="0" x2="0" y2="1">
                                        <stop offset="0" stop-color="#c2bda0" /><stop offset="1" stop-color="#b5ada0" />
                                    </linearGradient>
                                </defs>
                                <path d="M98 168h1569v869H98z" fill="url(#floor)" />

                                <!-- lower edges of the rooms -->
                                <g fill="#cdcfce">
                                    <path d="M98 653 392 649l40 28H98zM408 649l510-5-1 36H430zM942 644h145l4 32-149 3z" />
                                    <path d="M1106 650l276-4 58 0 75-23-10 36-120 20-275 0z" />
                                </g>
                                <path d="M472 168h22l-50 400-14 100-22-19z" fill="#bdbdc0" />
                                <path d="M494 168 418 680M504 168l-60 380M150 690l-52-30M1091 676l-149 3M1300 168l110 450 50 28M1340 168l68 300M1515 623h-130M1515 623l40-33M1110 682l300-5M1120 1037l-20-291" fill="none" stroke="#b2b3b5" />

                                <!-- left wall and its column -->
                                <path d="m455 168 15 0-62 481-16 0z" fill="#bcbdc1" />
                                <path d="m398 539 45 0-9 73-46 1z" fill="#777c80" stroke="#000" />
                                <path d="m399 560 40 2-3 18-40-3z" fill="#8991a6" opacity=".6" />
                                <path d="M455 168 392 649M470 168 408 649M98 653 392 649M408 649l510-5" fill="none" stroke="#000" />
                                <path d="M392 586h45M418 539l-9 73" stroke="#000" opacity=".4" />
                                <path d="m392 649 16 0 50 50h-20z" fill="#b8bac0" />

                                <!-- middle wall, column and the highlighted door -->
                                <path d="M912 168h14l12 365h-17z" fill="#c0c2ca" />
                                <path d="M907 168 914 533M912 168l9 365M926 168l12 365" fill="none" stroke="#000" />
                                <path d="M918 607h6l4 124h-10z" fill="#c9c9c7" />
                                <path d="M925 606h15l5 125h-15z" fill="#8699dc" stroke="#44549c" />
                                <path d="M927 664h5l3 67h-6z" fill="#b4aea6" />
                                <path d="M932 628l4 102M936 628l4 95M926 628h14M930 723h15" stroke="#4a5aa5" fill="none" />
                                <path d="M908 533h44l3 74-46 1z" fill="#7b7e7a" stroke="#000" />
                                <path d="M909 580h45" stroke="#000" opacity=".5" />
                                <path d="M918 533l-1 111M938 533l2 73M924 607l4 124M940 607l4 124M942 644h145" fill="none" stroke="#111" />
                                <circle cx="921" cy="562" r="2" /><circle cx="922" cy="598" r="2" />

                                <!-- lower cross wall -->
                                <path d="M98 741l996-11v16l-996 12z" fill="#bfc2cb" />
                                <path d="M98 741l996-11M98 758l996-12" fill="none" stroke="#000" />

                                <!-- right inner wall -->
                                <path d="M1087 636l364-5v-39l10 54-355 4 30 387h-18l-24-307z" fill="#b3b8c5" />
                                <path d="M1363 168h24l72 405h110l16 70 82 394h-15l-39-180-47-214-12-53-114 1h-24z" fill="#b9bfc9" />
                                <path d="M1094 730 1087 636l295-5h68l-7-39M1094 746l24 291M1136 1037l-30-387 355-4-10-54M1090 641l363-4-8-45" fill="none" stroke="#000" />
                                <path d="M1380 168h24l60 270v135h-6z" fill="#d8dcea" />
                                <path d="M1391 172l58 310" stroke="#fff" stroke-width="16" stroke-dasharray="8 6" fill="none" opacity=".8" />
                                <path d="M1404 168h14l30 150 16 90v50z" fill="#b8bdca" />
                                <path d="M1459 440v133h110l16 70h29l-22-83-30-120z" fill="#cfd4e4" />
                                <path d="m1500 560 30-5-10 8 40-2-4 24 20-5 2 24" stroke="#f0f2fb" stroke-width="4" fill="none" />

                                <!-- yard -->
                                <path d="M1419 168h22l30 130 120 262 45 112h-25l-40-110-100-230z" fill="#4d4e52" />
                                <path d="M1419 168h22l30 130 120 262 45 112h-25l-40-110-100-230z" filter="url(#gravel)" />
                                <path d="M1438 168h164v60h-150z" fill="#cdc2a3" />
                                <path d="M1438 168l16 75" stroke="#6b8a35" stroke-width="2" />
                                <path d="M1602 168h65v504h-22l-54-230z" fill="#68993a" />
                                <path d="M1602 168h65v504h-22l-54-230z" filter="url(#grain)" />
                                <path d="M1609 560l36 112M1592 560l36 112M1440 283l18 94M1403 168l55 275M1417 168l23 115" fill="none" stroke="#000" />
                                <path d="M1620 672h47v185l-10 0z" fill="#7b7d80" />
                                <path d="m1620 672 16 0 31 130v60z" fill="#666a72" />
                                <path d="M1620 672h47M1635 672l32 132M1643 752h24" fill="none" stroke="#222" />
                                <circle cx="1649" cy="695" r="2" /><circle cx="1658" cy="733" r="2" />

                                <!-- outer corner and window box -->
                                <path d="m1573 676 38-26 31 147 11 60h-40z" fill="#babfc7" />
                                <path d="m1611 650 8 0 48 205v15l-12-3z" fill="#e4e7f2" />
                                <path d="M1613 857h54v180h-15z" fill="#b1b6c2" />
                                <path d="M1635 857h32v145z" fill="#dfe3ee" />
                                <path d="M1363 168l78 423h113l12 53 47 214 39 180M1380 168l78 405h111l16 70M1565 643h63M1571 663l40-24M1573 676l37-26 32 147 11 60M1619 650l48 228M1604 816l38-19h8M1613 857h54M1635 860l32 142M1590 560l22 83" fill="none" stroke="#000" />
                                <path d="M1527 674l45 1 38 180-42 22z" fill="#c2c4c6" />
                                <path d="m1546 674 10 3 48 180-16 12z" fill="#c0c6cd" />
                                <path d="M1515 623 1527 674l41 203 33 160M1527 674h45M1568 877l45-20M1546 674l40 194" fill="none" stroke="#b0b1b3" />

                                <!-- lower left room -->
                                <path d="M98 759h210l-30 216-180 4z" fill="url(#tan)" />
                                <path d="M98 759h200M98 942l186-4M98 957l184-3" stroke="#dcc63a" stroke-width="2" />
                                <path d="M284 930h19l-5 34 153-2-7 75h-19l7-56-334 5v-8l172-3z" fill="#b5b8c5" />
                                <path d="M104 978l166-3v-5h9l-2 14-179 2z" fill="#e6e8f2" />
                                <path d="m98 940 53 15-4 23-49-10z" fill="#7b7d88" stroke="#111" />
                                <path d="M451 962l27 13-5 62h-29z" fill="#c4c6c8" />
                                <path d="M284 930l-7 54M303 930l-5 34 153-2-7 75M98 986l334-5-7 56M98 979l172-4" fill="none" stroke="#000" />
                                <path d="M98 998l330-4M100 988l45 10M278 984l36 14M340 930l-4 34M451 962l27 13-5 62" fill="none" stroke="#aeb0b4" />

                                <!-- view marker -->
                                <path d="M870 177h6m12 0h6" stroke="#3b7fd6" stroke-width="2" />
                                <path d="M876 177c3-5 9-5 12 0-3 5-9 5-12 0z" fill="#e5e5e5" stroke="#333" />
                                <circle cx="882" cy="177" r="2" />
                            </svg>

                            <!-- comment dialog -->
                            <section class="palette comment-dialog">
                                <header>
                                    <svg class="ico s16"><use href="#logo" /></svg>
                                    <h2>Uusi kommentti</h2>
                                    <button class="help" aria-label="Ohje">?</button>
                                    <button aria-label="Sulje"><svg class="ico s12"><use href="#cross" /></svg></button>
                                </header>
                                <div class="comment-text">
                                    <textarea aria-label="Kommentti">Tässä LVI:n muokattava lämpöpatterit</textarea>
                                    <div class="scroller"><i class="up"></i><i class="down"></i></div>
                                </div>
                                <footer>
                                    <button class="push">Kumoa</button>
                                    <button class="push primary">Lisää</button>
                                </footer>
                            </section>

                            <!-- issue organizer -->
                            <section class="palette organizer">
                                <header>
                                    <h2>Ongelmien organisoija</h2>
                                    <button aria-label="Sulje"><svg class="ico s12"><use href="#cross" /></svg></button>
                                </header>
                                <div class="organizer-body">
                                    <div class="org-left">
                                        <div class="org-tools">
                                            <button class="toggle active" aria-label="Kuvakkeet"><svg class="ico"><use href="#thumbs" /></svg></button>
                                            <button class="toggle" aria-label="Puu"><svg class="ico"><use href="#treeview" /></svg></button>
                                            <button class="gear push" aria-label="Asetukset"><svg class="ico s18"><use href="#gear" /></svg><i class="next"></i></button>
                                        </div>
                                        <div class="org-tree">
                                            <svg class="ico s10"><path d="m3 1 4 4-4 4" /></svg>
                                            <svg class="ico s16"><use href="#eye" /></svg>
                                            <span>Kaikki ongelmat (3)</span>
                                        </div>
                                    </div>
                                    <div class="org-right">
                                        <div class="org-tools">
                                            <button class="plain" aria-label="Uusi ongelma"><svg class="ico s18"><use href="#flagadd" /></svg></button>
                                            <button class="plain del off" aria-label="Poista"><svg class="ico s14"><use href="#cross" /></svg></button>
                                            <label class="search">
                                                <svg class="ico s14"><use href="#glass" /></svg>
                                                <input type="search" placeholder="Hae ongelmia" aria-label="Hae ongelmia">
                                            </label>
                                            <button class="toggle" aria-label="Lista"><svg class="ico s18"><use href="#vlist" /></svg></button>
                                            <button class="toggle" aria-label="Pienet kuvat"><svg class="ico s18"><use href="#vgrid" /></svg></button>
                                            <button class="toggle active" aria-label="Suuret kuvat"><svg class="ico s18"><use href="#vbig" /></svg></button>
                                            <button class="gear push" aria-label="Asetukset"><svg class="ico s18"><use href="#gear" /></svg><i class="next"></i></button>
                                        </div>
                                        <div class="issues">
                                            <figure>
                                                <div class="thumb">
                                                    <svg viewBox="0 0 160 90" class="pic">
                                                        <path d="M88 25l4 1v7l10 2 5-8 4 1-19 41-12-6v-12l4-8z" fill="#dcdcdc" />
                                                        <path d="M86 31l19 5-5 14-14-3z" fill="#aaa" />
                                                        <path d="M86 46l14 5-2 6-12-4zM86 55l11 5-3 5-8-5z" fill="#8f8f8f" />
                                                        <path d="M62 12h2m32-11h2m20 14h2m14 18h2m-60 14h2M52 71l4 2m8 3 3 2m10 8h4m15 0 3-1m20-3h2M128 8h2m-65 32h2m70-3h3m-8 24h2" stroke="#ddd" />
                                                        <path d="M134 80h6v6h-6z" fill="#e8e3d2" />
                                                    </svg>
                                                    <svg class="ico kind"><use href="#persp" /></svg>
                                                </div>
                                                <figcaption>Onko kalusteiden ja varusteide...</figcaption>
                                            </figure>
                                            <figure>
                                                <div class="thumb">
                                                    <svg class="pic"><use href="#thumb-plan" /></svg>
                                                    <svg class="ico kind"><use href="#persp" /></svg>
                                                </div>
                                                <figcaption><em>Pitääkö pysäköintitilaa muokata?</em></figcaption>
                                            </figure>
                                            <figure>
                                                <div class="thumb">
                                                    <svg viewBox="0 0 160 72" class="pic">
                                                        <path d="M0 0h160v72H0z" fill="#3c3b70" />
                                                        <path d="M75 60l63-40c8-3 14 4 16 14l6 8-58 30H0l26-16z" fill="#3d8548" />
                                                        <path d="M160 32v40H92z" fill="#c3c0ee" />
                                                        <path d="M0 25l22 40-22 7z" fill="#8f90b8" />
                                                        <path d="M0 0h96l22 28-42 32-30 12H38L0 22z" fill="#a79cab" />
                                                        <path d="M54 0 98 0l14 26-34 22z" fill="#a7a3c6" />
                                                        <path d="M0 20l13 14 24 38M13 34l22-16L22 0M35 18l22 22 18-16 24-18M55 0l24 40M58 42l12 16 14-12-10-12M96 0l22 28-74 44M35 18 56 0" fill="none" stroke="#6b6873" stroke-width="3" />
                                                        <path d="M0 19l13 14 24 38M13 33l22-16L22 0M35 17l22 22 42-35M96 0l22 28-74 44" fill="none" stroke="#cdc66c" />
                                                        <path d="M57 12l13 22M13 36l12 25" stroke="#720fa0" stroke-width="2" />
                                                        <path d="M8 6l9-3 5 8-8 4zM76 60l12-6 4 8-12 7z" fill="#878a9c" stroke="#5d6070" />
                                                    </svg>
                                                    <svg class="ico kind"><use href="#axo" /></svg>
                                                </div>
                                                <figcaption>PItääkö pysäköintitilat muokata?</figcaption>
                                            </figure>
                                        </div>
                                    </div>
                                </div>
                            </section>

                            <!-- issue manager -->
                            <section class="palette manager">
                                <header>
                                    <h2>Ongelman hallinta</h2>
                                    <button aria-label="Sulje"><svg class="ico s12"><use href="#cross" /></svg></button>
                                </header>
                                <button class="push issue-pick">Pitääkö pysäköintitilaa muokata?<i class="next"></i></button>
                                <div class="icon-row">
                                    <button class="plain" aria-label="Uusi ongelma"><svg class="ico s18"><use href="#flagadd" /></svg></button>
                                    <button class="plain del" aria-label="Poista ongelma"><svg class="ico s14"><use href="#cross" /></svg></button>
                                    <button class="plain last" aria-label="Ongelman tiedot"><svg class="ico s18"><use href="#flaglist" /></svg></button>
                                </div>
                                <button class="section"><i class="caret"></i>Näkymät</button>
                                <div class="gear-row"><button class="gear push" aria-label="Näkymäasetukset"><svg class="ico s18"><use href="#gear" /></svg><i class="next"></i></button></div>
                                <div class="views">
                                    <figure>
                                        <div class="thumb selected">
                                            <svg class="pic"><use href="#thumb-plan" /></svg>
                                            <svg class="ico kind"><use href="#persp" /></svg>
                                        </div>
                                        <figcaption>Näytä</figcaption>
                                    </figure>
                                </div>
                                <div class="icon-row tight">
                                    <button class="plain" aria-label="Lisää näkymä"><svg class="ico s18"><use href="#viewadd" /></svg></button>
                                    <button class="plain del" aria-label="Poista näkymä"><svg class="ico s14"><use href="#cross" /></svg></button>
                                </div>
                                <button class="section"><i class="caret"></i>Elementit</button>
                                <div class="elements">
                                    <ul>
                                        <li class="first"><i class="caret"></i><b>KOROSTA (1)</b><button aria-label="Lisää">+</button></li>
                                        <li class="picked"><svg class="ico s16"><use href="#doorline" /></svg><span>Ovi</span><button aria-label="Poista">−</button></li>
                                        <li><i class="next"></i><b>UUSI (0)</b><button aria-label="Lisää">+</button></li>
                                        <li><i class="next"></i><b>MUOKKAA (0)</b><button aria-label="Lisää">+</button></li>
                                        <li><i class="next"></i><b>POISTA (0)</b><button aria-label="Lisää">+</button></li>
                                    </ul>
                                    <div class="scroller"><i class="up"></i><i class="down"></i></div>
                                </div>
                                <div class="icon-row tall">
                                    <button class="plain" aria-label="Valitse elementit"><svg class="ico"><use href="#selbox" /></svg></button>
                                    <button class="plain" aria-label="Suodata"><svg class="ico s18"><use href="#viewfilter" /></svg></button>
                                    <button class="push square last" aria-label="Tarkistukset"><svg class="ico s24"><use href="#checks" /></svg></button>
                                </div>
                                <button class="push approve" disabled>Hyväksy</button>
                                <button class="section"><i class="caret"></i>Kommentit</button>
                                <div class="comments">
                                    <table>
                                        <thead>
                                            <tr><th>Mistä</th><th>Milloin<i class="down"></i></th></tr>
                                        </thead>
                                        <tbody></tbody>
                                    </table>
                                    <div class="scroller"><i class="up"></i><i class="down"></i></div>
                                </div>
                                <div class="icon-row">
                                    <button class="plain" aria-label="Uusi kommentti"><svg class="ico s18"><use href="#commentadd" /></svg></button>
                                </div>
                            </section>

                            <!-- Solibri connection -->
                            <section class="palette solibri">
                                <header>
                                    <h2>Solibri-yhteys</h2>
                                    <button aria-label="Sulje"><svg class="ico s12"><use href="#cross" /></svg></button>
                                </header>
                                <p class="updated"><svg class="ico s16"><use href="#info" /></svg>Päivitetty viimeksi: Tänään, ...</p>
                                <p class="note">Tallenna Solibri-tiedostosi<br>mallien linkittämiseksi!</p>
                                <hr>
                                <button class="push row green"><svg class="ico s18"><use href="#sync" /></svg><span>Päivitä Solibrissa</span></button>
                                <button class="push row"><svg class="ico s16"><use href="#gear" /></svg><span>Yhteysasetukset...</span></button>
                                <button class="push row"><svg class="ico s16"><use href="#export" /></svg><span>Vientiasetukset...</span></button>
                                <hr>
                                <button class="push row"><svg class="ico s16"><use href="#import" /></svg><span>Tuo merkityt ilmoitukset</span><i class="split"></i><i class="caret"></i></button>
                                <hr>
                                <button class="push row" disabled><svg class="ico s16"><use href="#basket" /></svg><span>Valitse Solibrissa</span></button>
                                <button class="push row"><svg class="ico s16"><use href="#basketin" /></svg><span>Hae valintakori</span><i class="split"></i><i class="caret"></i></button>
                                <div class="stats">
                                    <p>Elementit korissa:<span>-</span></p>
                                    <p>Tällä hetkellä valittu:<span>-</span></p>
                                    <p>Elementtejä ei valittuna<svg class="ico s12 faint"><use href="#info" /></svg></p>
                                </div>
                            </section>
                        </div>

                        <div class="quickbar">
                            <div class="zoom3">
                                <button class="dim" aria-label="Edellinen zoomaus"><svg class="ico s16"><use href="#zprev" /></svg></button>
                                <button class="dim" aria-label="Seuraava zoomaus"><svg class="ico s16"><use href="#znext" /></svg></button>
                                <button aria-label="Lähennä"><svg class="ico s16"><use href="#zin" /></svg></button>
                            </div>
                            <div class="zoom2">
                                <button aria-label="Kierrä näkymää"><svg class="ico s16"><use href="#orbit" /></svg></button>
                                <button aria-label="Kävele"><svg class="ico s16"><use href="#walk" /></svg></button>
                            </div>
                            <button class="quick"><svg class="ico s16"><use href="#zfit" /></svg><span class="dim">ei ole</span><i class="next dim"></i></button>
                            <button class="quick dim"><svg class="ico s16"><use href="#bucket" /></svg><span>ei ole</span><i class="next"></i></button>
                            <button class="quick"><svg class="ico s16"><use href="#scale" /></svg><span>1:100</span><i class="next"></i></button>
                            <button class="quick"><svg class="ico s16"><use href="#layers" /></svg><span>Muokattu</span><i class="next"></i></button>
                            <button class="quick"><svg class="ico s14"><use href="#structure" /></svg><span>Koko malli</span><i class="next"></i></button>
                            <button class="quick"><svg class="ico s16"><use href="#pen" /></svg><span>1 | KYNÄT</span><i class="next"></i></button>
                            <button class="quick"><svg class="ico s16"><use href="#frame" /></svg><span>100 Työpiirustus</span><i class="next"></i></button>
                            <button class="quick"><svg class="ico s16"><use href="#override" /></svg><span>@ Tilojen käytt...</span><i class="next"></i></button>
                            <button class="quick"><svg class="ico s16"><use href="#reno" /></svg><span>00 Näytä kaikki...</span><i class="next"></i></button>
                            <button class="quick"><svg class="ico s16"><use href="#partial" /></svg><span>Vain päämalli</span><i class="next"></i></button>
                            <button class="quick"><svg class="ico s14"><use href="#axo" /></svg><span>Yksinkertainen ...</span><i class="next"></i></button>
                        </div>
                    </div>
                </div>
            </div>

            <aside class="navigator">
                <span class="drag"></span>
                <div class="nav-tools">
                    <button class="active" aria-label="Projektikartta"><svg class="ico"><use href="#house" /></svg></button>
                    <span class="rule"></span>
                    <button aria-label="Näkymäkartta"><svg class="ico"><use href="#viewmap" /></svg></button>
                    <button aria-label="Planssikirja"><svg class="ico"><use href="#layouts" /></svg></button>
                    <button aria-label="Julkaisija"><svg class="ico"><use href="#publish" /></svg></button>
                    <button class="push menu" aria-label="Valikko"><svg class="ico s14"><path d="M1 2h12M1 7h12M1 12h12" /></svg><i class="next"></i></button>
                </div>
                <label class="search">
                    <svg class="ico s14"><use href="#glass" /></svg>
                    <input type="search" placeholder="Hae projektikartasta" aria-label="Hae projektikartasta">
                </label>
                <div class="nav-list">
                    <ul>
                        <li><svg class="ico s18"><use href="#draw" /></svg>190 Metalli-ikkunakaaviot (Itsenäinen)</li>
                        <li><svg class="ico s18"><use href="#draw" /></svg>190 Puualumiini-ikkunakaaviot (Itsenäinen)</li>
                        <li><svg class="ico s18"><use href="#draw" /></svg>190 Sisäikkunat (Itsenäinen)</li>
                        <li><svg class="ico s18"><use href="#draw" /></svg>200 Kiintokalustekaaviot (Itsenäinen)</li>
                        <li><svg class="ico s18"><use href="#draw" /></svg>X_DWG Korkeuskäyrät2015 (Itsenäinen)</li>
                        <li><svg class="ico s18"><use href="#draw" /></svg>X_DWG_Asemapiirros Maailmakoordinaatisto</li>
                        <li><svg class="ico s18"><use href="#draw" /></svg>X_DWG_Asemapiirros Paikalliskoordinaatisto</li>
                        <li><svg class="ico s18"><use href="#draw" /></svg>X_DWG_Asemapiirros Paikalliskoordinaatisto</li>
                        <li><svg class="ico s18"><use href="#draw" /></svg>X_DWG_Asemapiirros Pintarajat räjäytetty</li>
                        <li><svg class="ico s18"><use href="#draw" /></svg>x_DWG_Asemapiirros Tasaus (Itsenäinen)</li>
                        <li><svg class="ico s18"><use href="#draw" /></svg>x_DWG_Julkisivu Etelään (Itsenäinen)</li>
                        <li><svg class="ico s18"><use href="#draw" /></svg>x_DWG_Julkisivu Itään (Itsenäinen)</li>
                        <li><svg class="ico s18"><use href="#draw" /></svg>x_DWG_Julkisivu Länteen (Itsenäinen)</li>
                        <li><svg class="ico s18"><use href="#draw" /></svg>x_DWG_Julkisivu Pohjoiseen (Itsenäinen)</li>
                        <li><svg class="ico s18"><use href="#draw" /></svg>x_DWG_Leikkaus A-A (Itsenäinen)</li>
                        <li><svg class="ico s18"><use href="#draw" /></svg>x_DWG_Leikkaus B-B (Itsenäinen)</li>
                        <li><svg class="ico s18"><use href="#draw" /></svg>X_DWG_Pohjapiirros 01. Kerros (Itsenäinen)</li>
                        <li><svg class="ico s18"><use href="#draw" /></svg>X_DWG_Pohjapiirros 02. Kerros (Itsenäinen)</li>
                        <li><svg class="ico s18"><use href="#draw" /></svg>X_DWG_Pohjapiirros 03. Kerros (Itsenäinen)</li>
                        <li><svg class="ico s18"><use href="#draw" /></svg>X_DWG_Pohjapiirros 04. Kerros (Itsenäinen)</li>
                        <li><svg class="ico s18"><use href="#draw" /></svg>x_DWG_Leikkaus C-C (Itsenäinen)</li>
                        <li><svg class="ico s18"><use href="#draw" /></svg>X_DWG_Pohjapiirros Vesikatto (Itsenäinen)</li>
                        <li><svg class="ico s18"><use href="#draw" /></svg>Z_Logo (Itsenäinen)</li>
                        <li><svg class="ico s18"><use href="#draw" /></svg>Z_Logo tekstillä (Itsenäinen)</li>
                        <li><svg class="ico s18"><use href="#draw" /></svg>Z_Nimiö 0 Piirustusnimiö (Itsenäinen)</li>
                        <li><svg class="ico s18"><use href="#draw" /></svg>Z_Nimiö 1 Piirustusluettelo pysty (Itsenäinen)</li>
                        <li><svg class="ico s18"><use href="#draw" /></svg>Z_Nimiö 2 Piirustusluettelo (Itsenäinen)</li>
                        <li><svg class="ico s18"><use href="#draw" /></svg>Z_Nimiö 3 Ovi- ja ikkunakaavio (Itsenäinen)</li>
                        <li><svg class="ico s18"><use href="#draw" /></svg>Z_Nimiö 4 Esittely A4 (Itsenäinen)</li>
                        <li><svg class="ico s18"><use href="#draw" /></svg>Z_Nimiö 5 A3 Esittely vaaka (Itsenäinen)</li>
                        <li><svg class="ico s18"><use href="#draw" /></svg>Z_Nimiö 6 A3 Esittely pysty (Itsenäinen)</li>
                        <li class="up1"><svg class="ico s18"><use href="#detail" /></svg>Detaljit</li>
                        <li class="up1"><svg class="ico s18"><use href="#doc3d" /></svg>3D-asiakirjat</li>
                        <li class="up2"><svg class="ico s10"><path d="m1 3 4 4 4-4" stroke-width="2" /></svg><svg class="ico s18"><use href="#persp" /></svg>3D</li>
                        <li class="chosen"><svg class="ico s18"><use href="#persp" /></svg>Perspektiivi</li>
                        <li><svg class="ico s18"><use href="#axo" /></svg></li>
                    </ul>
                    <div class="track"><span></span></div>
                </div>
                <div class="hscroll"></div>
                <div class="nav-actions">
                    <button class="add" aria-label="Lisää"><svg class="ico s16"><use href="#plusc" /></svg></button>
                    <button class="set" aria-label="Ominaisuudet"><svg class="ico s16"><use href="#props" /></svg></button>
                    <button class="del off" aria-label="Poista"><svg class="ico s14"><use href="#cross" /></svg></button>
                </div>
                <button class="section"><i class="caret"></i>Tiedot</button>
                <p class="nav-info"><svg class="ico s14"><use href="#persp" /></svg><span>Perspektiivi</span></p>
                <button class="push settings">Asetukset...</button>
            </aside>
        </div>

        <footer class="status">
            <span>Osoita elementtiä tai piirrä valinta-alue. Paina ja pidä Ctrl+Vaihto elementin/alielementin valinnan vaihtamiseksi.</span>
            <svg class="ico s18 offline"><use href="#offline" /></svg>
            <strong>GRAPHISOFT <i>ID</i></strong>
            <svg class="ico s12 resizer"><path d="M9 3h2M9 6h2M6 6h2M9 9h2M6 9h2M3 9h2" stroke-width="2" /></svg>
        </footer>
    </div>
</body>

</html>
```
FILE: styles.css
```css
* {
    box-sizing: border-box;
}

body {
    margin: 0;
    background: #23292f;
    font-family: "Open Sans", "Noto Sans", sans-serif;
    font-size: 11px;
    line-height: 14px;
    color: #000;
}

h1, h2, p, ul, figure {
    margin: 0;
    padding: 0;
    font-size: inherit;
    font-weight: normal;
}

ul {
    list-style: none;
}

button {
    display: flex;
    align-items: center;
    justify-content: center;
    padding: 0;
    border: 0;
    background: none;
    font: inherit;
    color: inherit;
    white-space: nowrap;
}

.sprite {
    position: absolute;
    width: 0;
    height: 0;
}

.ico {
    width: 20px;
    height: 20px;
    flex: none;
    fill: none;
    stroke: currentColor;
    stroke-width: 1.2;
    color: #2b333b;
}

.s10 { width: 10px; height: 10px; }
.s12 { width: 12px; height: 12px; }
.s14 { width: 14px; height: 14px; }
.s16 { width: 16px; height: 16px; }
.s18 { width: 18px; height: 18px; }
.s24 { width: 24px; height: 24px; }
.ico.tall { width: 22px; height: 22px; }
.ico.wide { width: 27px; height: 20px; }

.active {
    background: #cce6fd;
    border: 1px solid #9bcbf2;
    border-radius: 3px;
}

/* small triangles */
.caret, .next, .up, .down {
    flex: none;
    width: 0;
    height: 0;
    border: 4px solid transparent;
}

.caret {
    border-top: 5px solid #333;
    border-bottom: 0;
}

.next {
    border-left: 5px solid #333;
    border-right: 0;
}

.up {
    border-bottom: 7px solid #999;
    border-top: 0;
}

.down {
    border-top: 7px solid #999;
    border-bottom: 0;
}

.dim {
    color: #999;
}

.dim .ico {
    color: #a3a3a3;
}

.push {
    background: #fdfdfd;
    border: 1px solid #c4c4c4;
    border-radius: 4px;
}

.push:disabled {
    color: #888;
    background: #f6f6f6;
    border-color: #e4e4e4;
}

.push:disabled .ico {
    opacity: .35;
}

.section {
    width: 100%;
    justify-content: flex-start;
    background: #d5d5d5;
    border-radius: 3px;
}

.search {
    display: flex;
    align-items: center;
    gap: 5px;
    height: 22px;
    padding-left: 4px;
    background: #fff;
    border-bottom: 1px solid #7d7d7d;
}

.search .ico {
    color: #555;
}

.search input {
    flex: 1;
    min-width: 0;
    padding: 0;
    border: 0;
    outline: 0;
    background: none;
    font: inherit;
}

.search input::placeholder {
    color: #444;
}

/* frame */
.app {
    display: flex;
    flex-direction: column;
    height: 100vh;
    border: 2px solid #454b52;
    border-radius: 8px;
    background: #efefef;
    overflow: hidden;
}

.titlebar {
    display: flex;
    align-items: center;
    height: 30px;
    padding-left: 7px;
    gap: 4px;
    background: #f3f3f3;
}

.titlebar > .ico {
    width: 18px;
    height: 18px;
}

.titlebar h1 {
    flex: 1;
    font-size: 12px;
    color: #8a8a8a;
}

.window-buttons {
    display: flex;
}

.window-buttons button {
    width: 46px;
    height: 30px;
}

.window-buttons .ico {
    color: #888;
}

.menubar {
    display: flex;
    align-items: center;
    gap: 15px;
    height: 19px;
    padding-left: 8px;
    background: #fff;
}

.menubar a {
    color: #5c5c5c;
    text-decoration: none;
}

.toolbar {
    display: flex;
    align-items: center;
    height: 36px;
    padding-left: 3px;
    border-bottom: 1px solid #d9d9d9;
}

.grip {
    width: 1px;
    height: 14px;
    background: #888;
}

.rule {
    width: 1px;
    height: 28px;
    margin: 0 4px;
    background: #999;
}

.rule.close {
    margin: 0 2px 0 3px;
}

.tool {
    width: 29px;
    height: 31px;
}

.labelled {
    width: auto;
    justify-content: flex-start;
    gap: 3px;
    padding-left: 2px;
}

.labelled .caret {
    margin-left: auto;
    margin-right: 6px;
}

.w-guide { width: 93px; }
.w-grid { width: 79px; }
.w-ghost { width: 114px; }
.w-measure { width: 59px; }
.w-group { width: 64px; }
.w-edit { width: 83px; }

.edit-grip {
    margin: 0 7px;
}

.w-cut {
    width: 126px;
    padding-left: 6px;
    background: #bcdcf4;
    border-radius: 3px 0 0 3px;
}

.cut-menu {
    width: 15px;
    background: #bcdcf4;
    border-left: 0;
    border-radius: 0 3px 3px 0;
}

.workspace {
    flex: 1;
    display: flex;
    min-height: 0;
}

.main {
    flex: 1;
    min-width: 0;
    display: flex;
    flex-direction: column;
}

.infobox {
    display: flex;
    align-items: flex-end;
    gap: 3px;
    height: 58px;
    padding: 0 4px 21px;
    border-bottom: 1px solid #dcdcdc;
}

.infobox .grip {
    height: 22px;
    margin-right: 2px;
}

.box {
    justify-content: space-between;
    width: 39px;
    height: 18px;
    padding: 0 3px 0 4px;
    background: #fafafa;
    border: 1px solid #c4c4c4;
    border-radius: 3px;
}

.box .ico {
    width: 18px;
    height: 16px;
}

.box.active {
    justify-content: center;
    background: #cce6fd;
    border-color: #9bcbf2;
}

.box.tall {
    width: 48px;
    height: 28px;
    padding-left: 10px;
}

.box.tall .ico {
    width: 18px;
    height: 18px;
}

.body {
    flex: 1;
    display: flex;
    min-height: 0;
}

/* toolbox */
.toolbox {
    display: flex;
    flex-direction: column;
    width: 96px;
    border-right: 1px solid #dcdcdc;
}

.drag {
    align-self: center;
    flex: none;
    width: 37px;
    height: 1px;
    margin: 5px 0 4px;
    background: #888;
}

.tools {
    display: grid;
    grid-template-columns: 44px 44px;
    grid-auto-rows: 30px;
    padding: 2px 0 4px;
}

.tools.selectors {
    grid-auto-rows: 28px;
    padding: 0 0 5px;
}

.tools.grey .ico {
    color: #8d9194;
}

.tools.grey .strong .ico {
    color: #2b333b;
}

.toolbox .section {
    height: 20px;
    gap: 10px;
    padding-left: 5px;
}

/* tabs */
.center {
    flex: 1;
    min-width: 0;
    display: flex;
    flex-direction: column;
}

.tabs {
    display: flex;
    height: 23px;
    background: #d9d9d9;
}

.overview {
    width: 26px;
    border-right: 1px solid #c2c2c2;
}

.tab {
    flex: 0 1 300px;
    justify-content: flex-start;
    padding: 0 8px 0 4px;
    border-right: 1px solid #c2c2c2;
}

.tab b {
    margin-left: auto;
    font-size: 14px;
}

.current {
    background: #fff;
    border: 0;
}

.tab-menu {
    width: 50px;
    gap: 8px;
    margin-left: auto;
    padding-left: 4px;
    background: #efefef;
}

.viewport {
    position: relative;
    flex: 1;
    min-height: 0;
    overflow: hidden;
}

.scene {
    display: block;
    width: 100%;
    height: 100%;
}

/* floating palettes */
.palette {
    position: absolute;
    display: flex;
    flex-direction: column;
    background: #efefef;
    border-radius: 8px;
    box-shadow: 0 0 2px rgba(0, 0, 0, .6), 0 18px 40px rgba(0, 0, 0, .35);
    overflow: hidden;
}

.palette > header {
    display: flex;
    align-items: center;
    height: 30px;
    padding: 0 9px;
    background: #f3f3f3;
}

.palette h2 {
    flex: 1;
    font-size: 12px;
    color: #8a8a8a;
}

.palette > header .s12 {
    color: #777;
}

.comment-dialog {
    left: 362px;
    top: 225px;
    width: 300px;
}

.comment-dialog > header {
    gap: 6px;
    padding: 0 17px 0 8px;
    background: #eff4f9;
}

.comment-dialog h2,
.comment-dialog > header .s12 {
    color: #111;
}

.help {
    margin-right: 30px;
    font-size: 14px;
}

.comment-text {
    display: flex;
    height: 147px;
    padding: 6px 2px 0 1px;
    border-bottom: 2px solid #0f6cb8;
}

.comment-text textarea {
    flex: 1;
    padding: 2px;
    border: 0;
    outline: 0;
    resize: none;
    overflow: hidden;
    background: #fff;
    font: inherit;
}

.scroller {
    display: flex;
    flex-direction: column;
    align-items: center;
    justify-content: space-between;
    width: 16px;
    padding: 6px 0 4px;
    background: #efefef;
}

.comment-dialog footer {
    display: flex;
    justify-content: flex-end;
    gap: 12px;
    padding: 7px 6px 6px;
}

.comment-dialog .push {
    width: 88px;
    height: 20px;
}

.push.primary {
    border-color: #0f6cb8;
}

/* organizer */
.organizer {
    left: 10px;
    top: 510px;
    width: 715px;
    height: 258px;
}

.organizer-body {
    flex: 1;
    display: flex;
    padding-bottom: 7px;
}

.org-left {
    display: flex;
    flex-direction: column;
    width: 150px;
}

.org-right {
    flex: 1;
    display: flex;
    flex-direction: column;
    margin-left: 5px;
    padding-left: 5px;
    border-left: 5px solid #f6f6f6;
}

.org-tools {
    display: flex;
    align-items: center;
    height: 37px;
    padding: 0 1px 0 5px;
}

.org-right .org-tools {
    padding: 0 6px 0 2px;
}

.org-right .search {
    flex: 1;
    margin: 0 4px 0 7px;
}

.toggle {
    width: 24px;
    height: 23px;
}

.gear {
    width: 28px;
    height: 21px;
    gap: 1px;
    margin-left: auto;
}

.org-right .gear {
    margin-left: 6px;
}

.plain {
    width: 20px;
    height: 20px;
}

.del .ico {
    color: #e04a2c;
    stroke-width: 2.4;
}

.del.off .ico {
    opacity: .45;
}

.org-right .del {
    margin-left: 7px;
}

.org-tree {
    flex: 1;
    display: flex;
    align-items: flex-start;
    gap: 5px;
    padding: 4px 0 0 7px;
    background: #fff;
}

.org-tree .s10 {
    margin-top: 4px;
}

.issues {
    flex: 1;
    display: flex;
    gap: 20px;
    padding: 4px 9px;
    background: #fff;
}

.issues figure {
    flex: none;
    width: 160px;
}

.thumb {
    position: relative;
    display: flex;
    align-items: center;
    justify-content: center;
    width: 160px;
    height: 90px;
}

.pic {
    width: 160px;
    max-height: 90px;
}

.thumb .kind {
    position: absolute;
    right: 1px;
    bottom: 2px;
    background: rgba(255, 255, 255, .4);
}

figcaption {
    display: flex;
    justify-content: center;
    margin-top: 2px;
    white-space: nowrap;
}

/* issue manager */
.manager {
    left: 1049px;
    top: 44px;
    width: 235px;
}

.manager > .section {
    width: auto;
    height: 22px;
    margin: 0 2px;
    gap: 9px;
    padding-left: 7px;
}

.issue-pick {
    justify-content: space-between;
    height: 21px;
    margin: 3px 3px 0;
    padding: 0 3px;
}

.icon-row {
    display: flex;
    align-items: center;
    gap: 10px;
    height: 36px;
    padding: 0 7px;
}

.icon-row .last {
    margin-left: auto;
}

.icon-row.tight {
    height: 35px;
}

.icon-row.tall {
    height: 35px;
    padding-right: 3px;
}

.square {
    width: 28px;
    height: 28px;
}

.gear-row {
    display: flex;
    padding: 3px;
}

.views {
    height: 136px;
    padding: 4px 10px;
    background: #fff;
}

.views figure {
    width: 160px;
}

.thumb.selected {
    background: #bcdcf2;
}

.views figcaption {
    width: 34px;
    margin: 2px auto;
    background: #0f74c6;
    color: #fff;
}

.elements {
    display: flex;
    height: 160px;
    background: #fff;
}

.elements ul {
    flex: 1;
    margin-right: 1px;
}

.elements li {
    display: flex;
    align-items: center;
    height: 21px;
    padding: 0 4px 0 3px;
    background: #ececec;
}

.elements li .caret,
.elements li .next,
.elements li .ico {
    margin-right: auto;
}

.elements li b,
.elements li span {
    width: 171px;
}

.elements li.first {
    height: 23px;
}

.elements .picked {
    height: 20px;
    background: #d8e9d0;
}

.elements button {
    width: 16px;
    font-size: 18px;
    line-height: 18px;
    color: #888;
}

.elements .picked button {
    color: #222;
}

.approve {
    height: 21px;
    margin: 0 3px 4px;
}

.comments {
    display: flex;
    height: 122px;
    padding-top: 2px;
}

.comments table {
    flex: 1;
    align-self: stretch;
    border-collapse: collapse;
    background: #fff;
}

.comments th {
    width: 110px;
    height: 18px;
    padding: 2px 3px 0 2px;
    border-right: 1px solid #e2e2e2;
    font-weight: normal;
    text-align: left;
    vertical-align: top;
}

.comments th .down {
    float: right;
    margin-top: 5px;
}

.comments .scroller {
    padding-top: 24px;
}

/* Solibri */
.solibri {
    left: 1360px;
    top: 52px;
    width: 184px;
}

.solibri hr {
    width: 100%;
    height: 1px;
    margin: 6px 0 7px;
    border: 0;
    background: #999;
}

.updated {
    display: flex;
    align-items: center;
    gap: 6px;
    height: 24px;
    padding-left: 6px;
    white-space: nowrap;
}

.note {
    padding: 0 8px;
    line-height: 13px;
}

.row {
    flex: none;
    justify-content: flex-start;
    height: 21px;
    margin: 0 3px 4px;
    padding: 0 6px 0 3px;
    gap: 5px;
}

.solibri .row + hr {
    margin-top: 2px;
}

.row span {
    flex: 1;
    text-align: left;
}

.row.green .ico {
    color: #27a35a;
}

.split {
    width: 1px;
    height: 15px;
    background: #999;
}

.stats {
    display: grid;
    grid-template-rows: 24px 23px 22px;
    padding: 0 6px 0 8px;
}

.stats p {
    display: flex;
    justify-content: space-between;
    align-items: flex-start;
    padding-top: 2px;
}

.faint {
    color: #aaa;
}

/* quick options */
.quickbar {
    display: flex;
    height: 19px;
}

.quickbar > * {
    border-right: 1px solid #999;
}

.quickbar > :last-child {
    border: 0;
}

.zoom3, .zoom2 {
    display: flex;
    align-items: center;
    justify-content: space-around;
}

.zoom3 {
    width: 72px;
}

.zoom2 {
    width: 51px;
}

.quick {
    flex: 1;
    min-width: 0;
    padding: 0 3px 0 7px;
}

.quick span {
    flex: 1;
    text-align: center;
}

.quick.dim .next,
.quick .next.dim {
    border-left-color: #aaa;
}

/* navigator */
.navigator {
    display: flex;
    flex-direction: column;
    width: 251px;
    border-left: 1px solid #d5d5d5;
}

.navigator .drag {
    width: 70px;
    margin: 3px 0 5px;
}

.nav-tools {
    display: flex;
    align-items: center;
    height: 29px;
    padding: 0 1px 0 2px;
}

.nav-tools button {
    width: 30px;
    height: 29px;
}

.nav-tools .rule {
    height: 20px;
    margin: 0 5px;
}

.nav-tools .menu {
    width: 33px;
    height: 21px;
    margin-left: auto;
    gap: 5px;
}

.navigator > .search {
    margin: 6px 1px 3px 3px;
}

.nav-list {
    flex: 1;
    display: flex;
    min-height: 0;
}

.nav-list ul {
    flex: 1;
    min-width: 0;
    background: #fff;
    overflow: hidden;
}

.nav-list li {
    display: flex;
    align-items: center;
    gap: 5px;
    height: 22px;
    padding-left: 40px;
    white-space: nowrap;
}

.nav-list .up1 {
    padding-left: 30px;
}

.nav-list .up2 {
    padding-left: 16px;
}

.nav-list .chosen {
    background: #d9d9d9;
    font-weight: bold;
}

.track {
    width: 14px;
    padding: 214px 0 0 7px;
}

.track span {
    display: block;
    width: 2px;
    height: 222px;
    background: #888;
}

.hscroll {
    width: 105px;
    height: 2px;
    margin: 7px 0 0 17px;
    background: #888;
}

.nav-actions {
    display: flex;
    align-items: center;
    gap: 14px;
    height: 41px;
    padding: 6px 0 0 9px;
}

.add .ico {
    color: #a9c3ea;
}

.set .ico {
    color: #2f6fd0;
}

.navigator .section {
    width: auto;
    height: 22px;
    margin-left: 2px;
    gap: 10px;
    padding-left: 7px;
}

.nav-info {
    display: flex;
    align-items: center;
    height: 26px;
    padding: 0 48px 0 4px;
}

.nav-info span {
    flex: 1;
    text-align: center;
}

.settings {
    height: 21px;
    margin: 0 1px 3px 3px;
}

/* status line */
.status {
    display: flex;
    align-items: center;
    height: 22px;
    padding-left: 3px;
    border-top: 1px solid #d5d5d5;
}

.status .offline {
    margin-left: auto;
}

.status strong {
    margin-left: 3px;
    padding: 0 15px 0 17px;
    border: 1px solid #d5d5d5;
    border-width: 0 1px;
    font-family: Lato, sans-serif;
    font-size: 13px;
    line-height: 21px;
    font-weight: 500;
    color: #2b333b;
}

.status strong i {
    font-style: normal;
    font-weight: 300;
}

.resizer {
    margin: 6px 0 0 8px;
    color: #aaa;
}
```
